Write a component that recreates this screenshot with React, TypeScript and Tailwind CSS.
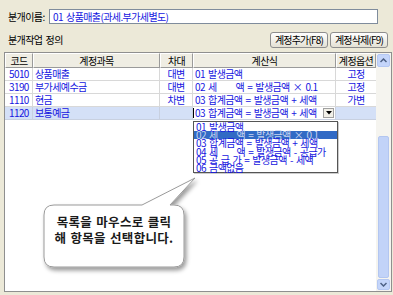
const rows = [
  { code: '5010', name: '상품매출', side: '대변', calc: '01 발생금액', opt: '고정' },
  { code: '3190', name: '부가세예수금', side: '대변', calc: '02 세      액 = 발생금액 × 0.1', opt: '고정' },
  { code: '1110', name: '현금', side: '차변', calc: '03 합계금액 = 발생금액 + 세액', opt: '가변' },
];

const options = [
  '01 발생금액',
  '02 세      액 = 발생금액 × 0.1',
  '03 합계금액 = 발생금액 + 세액',
  '04 세      액 = 발생금액 - 공급가',
  '05 공 급 가 = 발생금액 - 세액',
  '06 금액없음',
];

const Th = ({ w, children }: { w: string; children: React.ReactNode }) => (
  <div
    className={`${w} h-[15px] flex items-center justify-center border-r border-b border-[#9a9a9a] border-t border-t-white border-l border-l-white bg-[#efede3] text-black`}
  >
    {children}
  </div>
);

const App = () => {
  return (
    <div className="relative w-[393px] h-[295px] overflow-hidden bg-[#ece9d8] font-['Noto_Sans_CJK_KR',sans-serif] text-[10px] tracking-[-0.6px] [word-spacing:1.5px] leading-none">
      {/* 분개이름 */}
      <div className="flex items-center pt-[9px] pl-[8px]">
        <span className="w-[41px] text-black">분개이름:</span>
        <div className="w-[329px] h-[15px] border border-[#7f8c9c] bg-white flex items-center pl-[3px] text-[#1515e0]">
          01 상품매출(과세.부가세별도)
        </div>
      </div>

      {/* 분개작업 정의 + buttons */}
      <div className="flex items-center justify-between pl-[8px] pr-[5px] mt-[8px]">
        <span className="text-black">분개작업 정의</span>
        <div className="flex gap-[2px]">
          <button className="w-[58px] h-[16px] rounded-[3px] border border-[#8d8d8d] bg-gradient-to-b from-white to-[#e4e1d4] text-black tracking-[-0.8px]">
            계정추가(F8)
          </button>
          <button className="w-[58px] h-[16px] rounded-[3px] border border-[#8d8d8d] bg-gradient-to-b from-white to-[#e4e1d4] text-black tracking-[-0.8px]">
            계정삭제(F9)
          </button>
        </div>
      </div>

      {/* grid */}
      <div className="ml-[4px] mt-[4px] w-[388px] h-[240px] border border-[#8f8f8f] bg-white flex">
        <div className="flex-1 flex flex-col">
          <div className="flex">
            <Th w="w-[28px]">코드</Th>
            <Th w="w-[127px]">계정과목</Th>
            <Th w="w-[33px]">차대</Th>
            <Th w="w-[143px]">계산식</Th>
            <Th w="w-[40px]">계정옵션</Th>
          </div>
          {rows.map((r) => (
            <div key={r.code} className="flex h-[13px] text-[#1515e0]">
              <div className="w-[28px] pl-[4px] flex items-center border-r border-b border-[#d8d8d8]">{r.code}</div>
              <div className="w-[127px] pl-[2px] flex items-center border-r border-b border-[#d8d8d8]">{r.name}</div>
              <div className="w-[33px] flex items-center justify-center border-r border-b border-[#d8d8d8]">{r.side}</div>
              <div className="w-[143px] pl-[2px] flex items-center border-r border-b border-[#d8d8d8] whitespace-pre">{r.calc}</div>
              <div className="w-[40px] flex items-center justify-center border-b border-[#d8d8d8]">{r.opt}</div>
            </div>
          ))}
          <div className="flex h-[13px] text-[#1515e0]">
            <div className="w-[28px] pl-[4px] flex items-center bg-[#d4e0f7] border-r border-b border-[#c8d0e0]">1120</div>
            <div className="w-[127px] pl-[2px] flex items-center bg-[#d4e0f7] border-r border-b border-[#c8d0e0]">보통예금</div>
            <div className="w-[33px] bg-[#d4e0f7] border-r border-b border-[#c8d0e0]" />
            <div className="relative w-[143px] flex items-center bg-white border-r border-b border-[#c8d0e0] whitespace-pre">
              <span className="w-[1px] h-[10px] bg-black mr-[1px]" />
              03 합계금액 = 발생금액 + 세액
              <div className="absolute right-[1px] top-[1px] w-[11px] h-[10px] border border-[#a0a0a0] bg-[#f2f0e8] flex items-center justify-center">
                <svg width="6" height="4" viewBox="0 0 6 4">
                  <path d="M0 0h6L3 3.5z" fill="#000" />
                </svg>
              </div>
            </div>
            <div className="w-[40px] bg-[#d4e0f7] border-b border-[#c8d0e0]" />
          </div>
        </div>

        {/* scrollbar */}
        <div className="w-[15px] bg-[#f5f4ef] flex flex-col items-center">
          <div className="mt-[1px] w-[13px] h-[13px] rounded-[2px] bg-[#c4d5fa] border border-[#b5c8f2] flex items-center justify-center">
            <svg width="7" height="5" viewBox="0 0 7 5">
              <path d="M0.5 4L3.5 1L6.5 4" stroke="#4d6185" strokeWidth="1.5" fill="none" />
            </svg>
          </div>
          <div className="flex-1" />
          <div className="w-[11px] h-[142px] rounded-[2px] bg-[#c2d3f8] border border-[#b3c6f0]" />
          <div className="mb-[1px] mt-[1px] w-[13px] h-[11px] rounded-[2px] bg-[#c4d5fa] border border-[#b5c8f2] flex items-center justify-center">
            <svg width="7" height="5" viewBox="0 0 7 5">
              <path d="M0.5 1L3.5 4L6.5 1" stroke="#4d6185" strokeWidth="1.5" fill="none" />
            </svg>
          </div>
        </div>
      </div>

      {/* dropdown list */}
      <div className="absolute left-[193px] top-[121px] w-[145px] h-[52px] border border-[#555] bg-white py-[1px] text-[#1515e0] shadow-[1px_1px_0_rgba(0,0,0,0.2)]">
        {options.map((o, i) => (
          <div
            key={o}
            className={`h-[8.2px] leading-[8px] pl-[2px] whitespace-pre overflow-visible ${
              i === 1 ? 'bg-[#316ac5] text-[#c8d4f0]' : ''
            }`}
          >
            {o}
          </div>
        ))}
      </div>

      {/* callout */}
      <svg className="absolute left-[38px] top-[172px]" width="165" height="105" viewBox="38 172 165 105">
        <defs>
          <filter id="sh" x="-20%" y="-20%" width="140%" height="140%">
            <feDropShadow dx="2" dy="3" stdDeviation="2" floodColor="#000" floodOpacity="0.4" />
          </filter>
        </defs>
        <path
          d="M54 205 H142 L195 178 L170 205 H174 Q184 205 184 215 V257 Q184 267 174 267 H54 Q44 267 44 257 V215 Q44 205 54 205 Z"
          fill="#fff"
          stroke="#9a9a9a"
          strokeWidth="1"
          filter="url(#sh)"
        />
      </svg>
      <div className="absolute left-[44px] top-[216px] w-[140px] flex flex-col items-center gap-[3px] text-[12.5px] font-bold tracking-[0.3px] [word-spacing:1px] text-[#1a1a1a]">
        <span>목록을 마우스로 클릭</span>
        <span>해 항목을 선택합니다.</span>
      </div>
    </div>
  );
};

export default App;
